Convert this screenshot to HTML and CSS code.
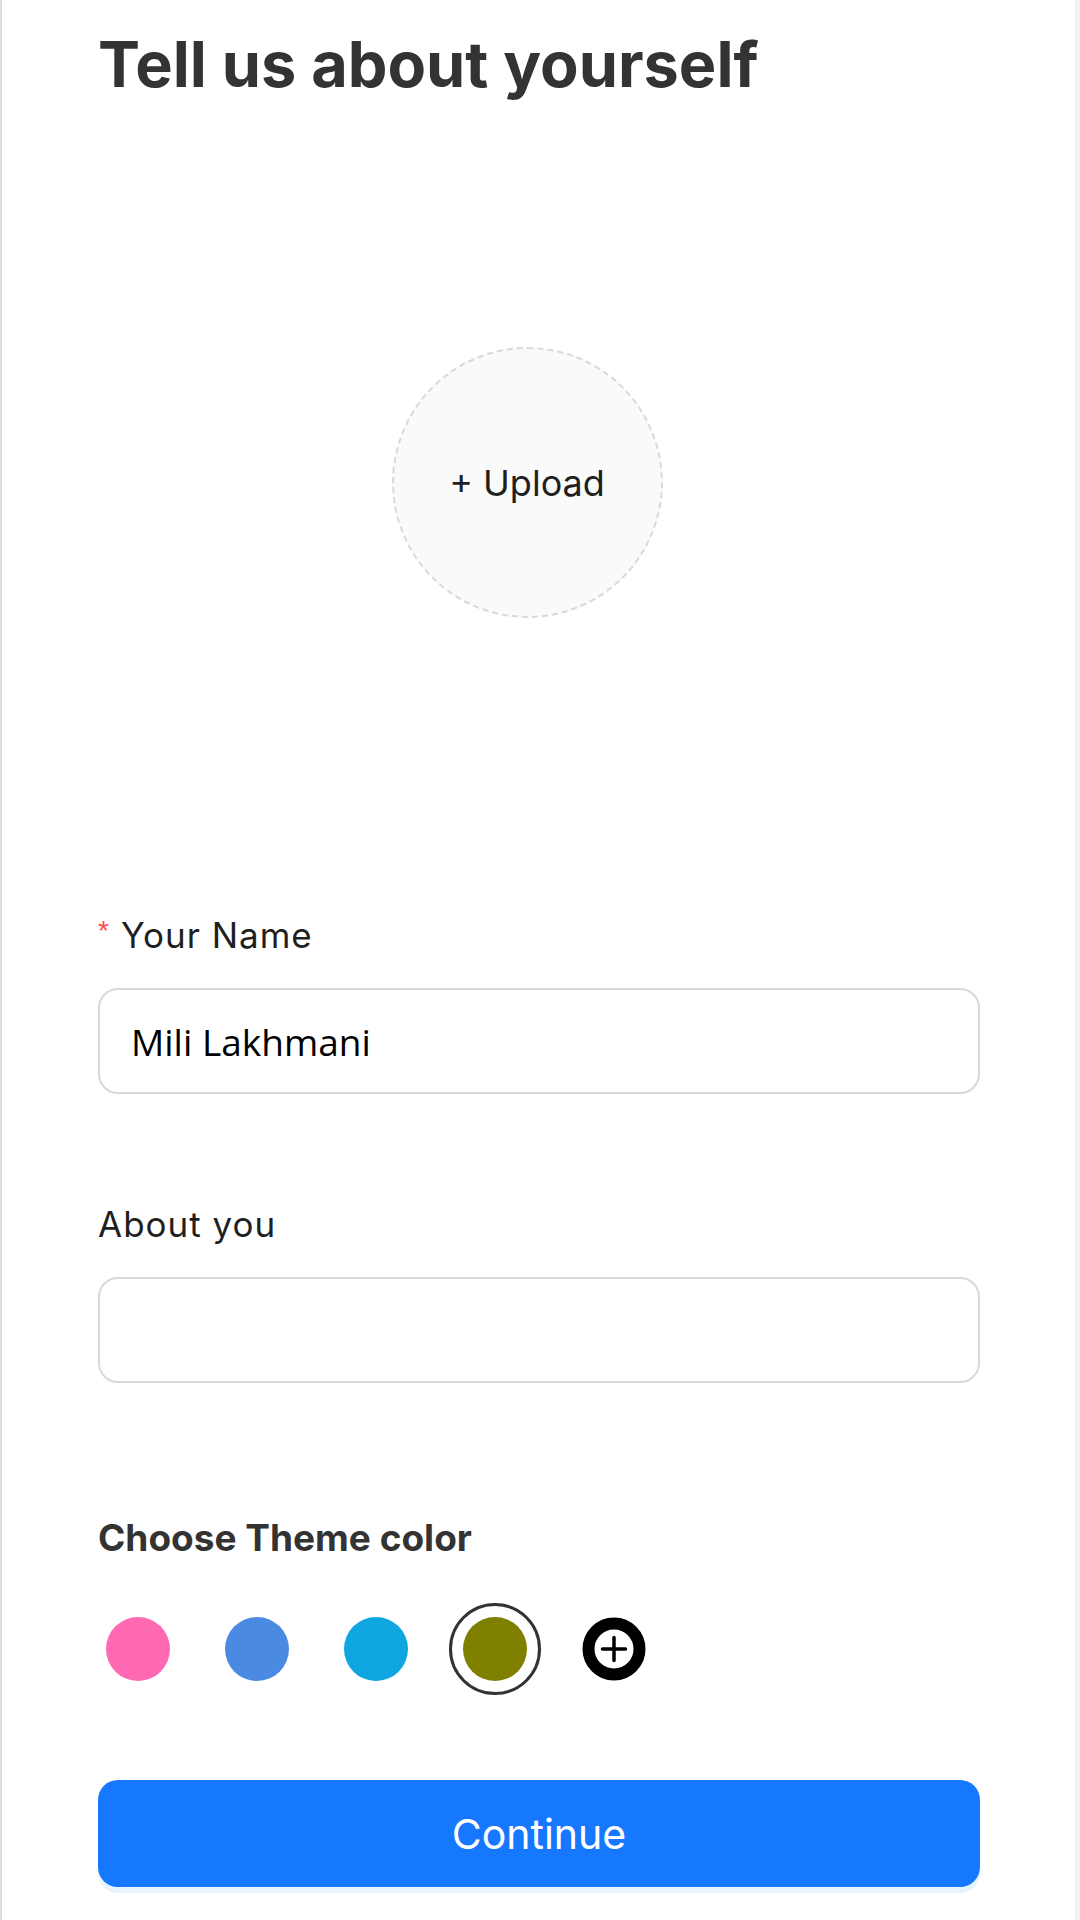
FILE: index.html
```html
<!DOCTYPE html>
<html lang="en">
<head>
<meta charset="utf-8">
<title>Tell us about yourself</title>
<link rel="stylesheet" href="styles.css">
</head>
<body>
<div class="page">
  <main class="main">
    <div class="form">
      <h1 class="title">Tell us about yourself</h1>

      <div class="upload-wrap">
        <div class="upload">+ Upload</div>
      </div>

      <div class="field field-first">
        <div class="label"><span class="req">*</span>Your Name</div>
        <div class="input">Mili Lakhmani</div>
      </div>

      <div class="field field-next">
        <div class="label">About you</div>
        <div class="input"></div>
      </div>

      <div class="theme-label">Choose Theme color</div>
      <div class="swatches">
        <div class="slot"><span class="dot dot-pink"></span></div>
        <div class="slot"><span class="dot dot-blue"></span></div>
        <div class="slot"><span class="dot dot-sky"></span></div>
        <div class="slot selected"><span class="dot dot-olive"></span></div>
        <div class="slot">
          <svg class="add" viewBox="0 0 64 64" width="64" height="64">
            <circle cx="32" cy="32" r="25.5" fill="none" stroke="#000" stroke-width="12"/>
            <line x1="20.5" y1="32" x2="43.5" y2="32" stroke="#000" stroke-width="3.5" stroke-linecap="round"/>
            <line x1="32" y1="20.5" x2="32" y2="43.5" stroke="#000" stroke-width="3.5" stroke-linecap="round"/>
          </svg>
        </div>
      </div>

      <button class="btn" type="button">Continue</button>
    </div>
  </main>
  <div class="rail"></div>
</div>
</body>
</html>
```

FILE: styles.css
```css
* { box-sizing: border-box; }

html, body {
  margin: 0;
  padding: 0;
  background: #ffffff;
}

body {
  font-family: Inter, "Noto Sans", "Liberation Sans", sans-serif;
  color: #1f1f1f;
}

.page {
  display: flex;
  min-height: 1920px;
  width: 1080px;
}

.main {
  flex: 1;
  border-left: 2px solid #dcdcdc;
  padding: 25px 0 0 96px;
  background: #ffffff;
}

.rail {
  width: 5px;
  background: #eef2f7;
}

.form {
  width: 882px;
}

.title {
  margin: 0;
  font-size: 63px;
  line-height: 78px;
  font-weight: 700;
  color: #333333;
  letter-spacing: 0;
}

.upload-wrap {
  margin-top: 244px;
  display: flex;
  justify-content: center;
  padding-right: 24px;
}

.upload {
  width: 271px;
  height: 271px;
  border: 2px dashed #d9d9d9;
  border-radius: 50%;
  background: #fafafa;
  display: flex;
  align-items: center;
  justify-content: center;
  font-size: 36px;
  color: #1f1f1f;
}

.field-first { margin-top: 293px; }
.field-next { margin-top: 106px; }

.label {
  font-size: 35px;
  line-height: 48px;
  letter-spacing: 1px;
  color: #1f1f1f;
  display: flex;
  align-items: flex-start;
}

.req {
  color: #ff4d4f;
  font-size: 28px;
  line-height: 40px;
  margin-right: 12px;
  letter-spacing: 0;
  font-family: "Liberation Sans", sans-serif;
}

.input {
  margin-top: 29px;
  height: 106px;
  border: 2px solid #d9d9d9;
  border-radius: 20px;
  padding: 0 31px;
  display: flex;
  align-items: center;
  font-family: "Open Sans", "Noto Sans", sans-serif;
  font-size: 37px;
  color: #000000;
  background: #ffffff;
}

.theme-label {
  margin-top: 131px;
  font-size: 37px;
  line-height: 48px;
  font-weight: 700;
  color: #333333;
}

.swatches {
  margin-top: 41px;
  margin-left: -6px;
  display: flex;
  gap: 27px;
  align-items: center;
  height: 92px;
}

.slot {
  width: 92px;
  height: 92px;
  display: flex;
  align-items: center;
  justify-content: center;
  border-radius: 50%;
}

.slot.selected {
  border: 3px solid #333333;
}

.dot {
  display: block;
  width: 64px;
  height: 64px;
  border-radius: 50%;
}

.dot-pink { background: #ff69b4; }
.dot-blue { background: #4a8ae2; }
.dot-sky { background: #0ea5e0; }
.dot-olive { background: #808000; }

.add {
  display: block;
}

.btn {
  display: block;
  margin-top: 85px;
  width: 100%;
  height: 107px;
  border: none;
  border-radius: 20px;
  background: #1677ff;
  color: #ffffff;
  font-family: Inter, "Liberation Sans", sans-serif;
  font-size: 41px;
  box-shadow: 0 6px 0 rgba(5, 145, 255, 0.1);
  cursor: pointer;
}
```
